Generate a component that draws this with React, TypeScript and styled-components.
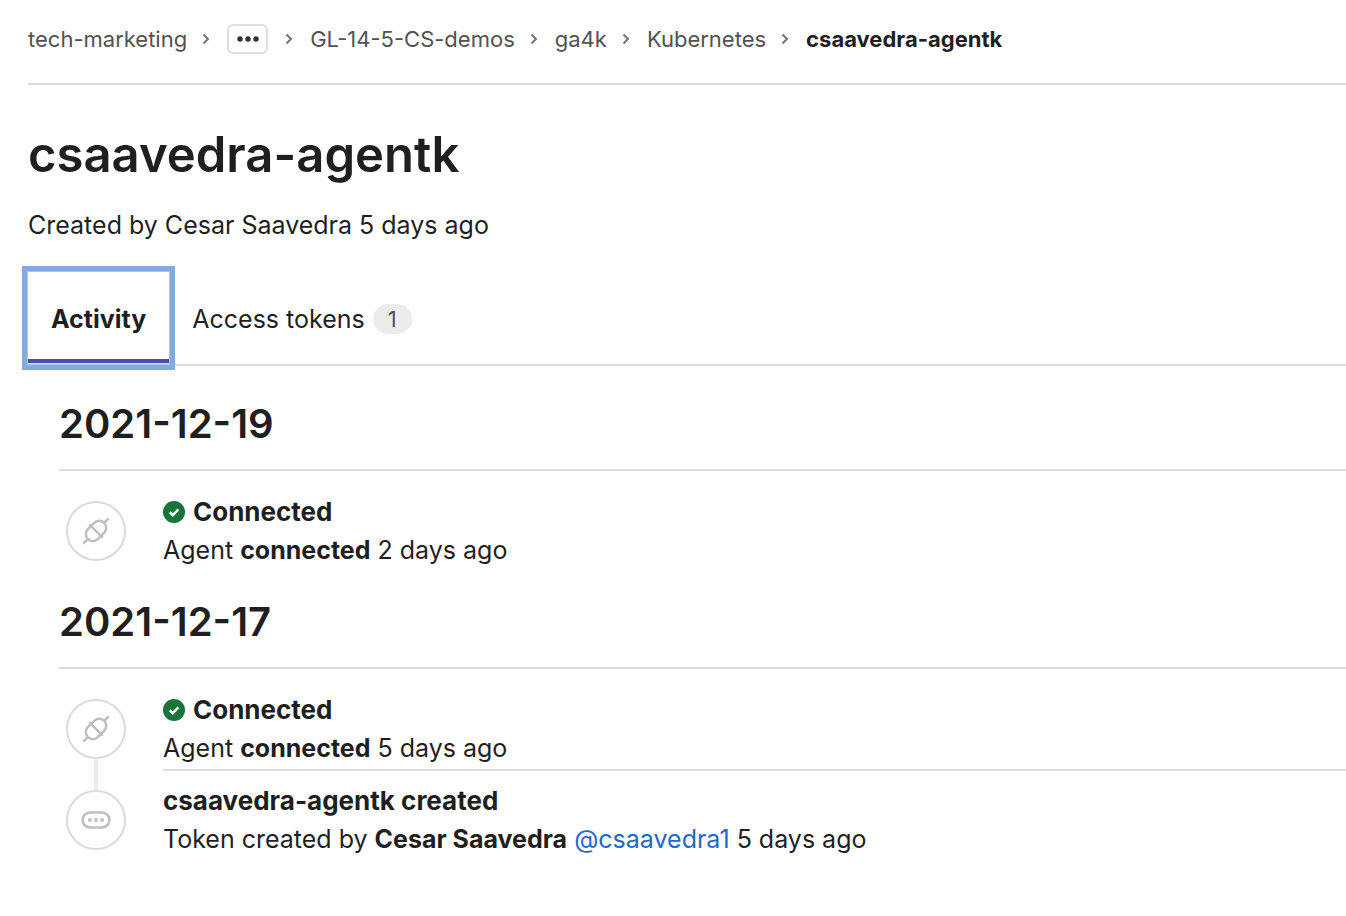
import React from "react";
import styled, { createGlobalStyle } from "styled-components";

const GlobalStyle = createGlobalStyle`
  *, *::before, *::after { box-sizing: border-box; }
  body {
    margin: 0;
    background: #fff;
    color: #1f1f1f;
    font-family: Inter, "Liberation Sans", sans-serif;
    font-size: 25px;
    line-height: 38px;
  }
`;

const Page = styled.main`
  padding-left: 28px;
`;

const Breadcrumbs = styled.nav`
  padding: 19px 0 24px;
  border-bottom: 2px solid #dbdbdb;
`;

const CrumbList = styled.ol`
  display: flex;
  flex-wrap: wrap;
  align-items: center;
  margin: 0;
  padding: 0;
  list-style: none;
  font-size: 22px;
  line-height: 40px;
`;

const Crumb = styled.li`
  display: flex;
  align-items: center;
`;

const CrumbLink = styled.a<{ $current?: boolean }>`
  color: ${(p) => (p.$current ? "#1f1f1f" : "#525252")};
  font-weight: ${(p) => (p.$current ? 700 : 400)};
  text-decoration: none;
`;

const Separator = styled.svg`
  width: 8px;
  height: 12px;
  margin: 0 17px 0 15px;
`;

const MoreButton = styled.button`
  display: flex;
  align-items: center;
  justify-content: center;
  width: 41px;
  height: 30px;
  margin-right: 2px;
  padding: 0;
  border: 2px solid #dfdfdf;
  border-radius: 6px;
  background: #fff;
`;

const Title = styled.h1`
  margin: 40px 0 0;
  font-size: 49px;
  font-weight: 600;
  line-height: 60px;
`;

const Subtitle = styled.p`
  margin: 21px 0 28px;
`;

const Tabs = styled.div`
  display: flex;
  border-bottom: 2px solid #dbdbdb;
`;

const Tab = styled.button<{ $active?: boolean }>`
  position: relative;
  z-index: ${(p) => (p.$active ? 1 : 0)};
  display: flex;
  align-items: center;
  gap: 8px;
  height: 92px;
  padding: 1px 23px 0;
  border: 0;
  background: #fff;
  color: #1f1f1f;
  font: inherit;
  font-weight: ${(p) => (p.$active ? 700 : 400)};
  outline: none;
  box-shadow: ${(p) =>
    p.$active
      ? "inset 0 -1px #cfe0f5, inset 0 -5px #4b4ba3, 0 0 0 1px #a5c5ec, 0 0 0 6px #82abdc"
      : "none"};
`;

const Count = styled.span`
  padding: 0 15px;
  border-radius: 15px;
  background: #ececec;
  color: #525252;
  font-size: 22px;
  line-height: 30px;
`;

const Feed = styled.div`
  display: flex;
  flex-direction: column;
  gap: 27px;
  padding: 34px 0 40px 31px;
`;

const DateHeading = styled.h2`
  margin: 0 0 11px;
  padding-bottom: 21px;
  border-bottom: 2px solid #dbdbdb;
  font-size: 40px;
  font-weight: 600;
  line-height: 48px;
`;

const Events = styled.ul`
  margin: 0;
  padding: 0 0 0 7px;
  list-style: none;
`;

const Event = styled.li`
  display: flex;
  gap: 37px;
`;

const Marker = styled.div`
  display: flex;
  flex-direction: column;
  align-items: center;
  flex: none;
  width: 60px;
`;

const Stem = styled.span<{ $visible?: boolean; $fill?: boolean }>`
  width: 4px;
  flex: ${(p) => (p.$fill ? "1 0 0" : "0 0 19px")};
  background: ${(p) => (p.$visible ? "#ebebeb" : "transparent")};
`;

const Circle = styled.span`
  display: flex;
  align-items: center;
  justify-content: center;
  flex: none;
  width: 60px;
  height: 60px;
  border: 2px solid #dbdbdb;
  border-radius: 50%;
  background: #fff;
`;

const Details = styled.div<{ $divided?: boolean }>`
  flex: 1;
  padding: 11px 0 2px;
  border-bottom: ${(p) => (p.$divided ? "2px solid #dbdbdb" : "0")};
`;

const EventTitle = styled.h3`
  display: flex;
  align-items: center;
  gap: 8px;
  margin: 0;
  font-size: 26px;
  font-weight: 700;
  line-height: 38px;
`;

const EventText = styled.p`
  margin: 0;
`;

const Strong = styled.strong`
  font-weight: 700;
`;

const UserLink = styled.a`
  color: #1f69c9;
  text-decoration: none;
`;

const Chevron = () => (
  <Separator viewBox="0 0 8 12" fill="none" stroke="#737373" strokeWidth="2" aria-hidden="true">
    <path d="M1.5 1.5 6 6l-4.5 4.5" />
  </Separator>
);

const EllipsisIcon = () => (
  <svg width="24" height="8" viewBox="0 0 24 8" fill="#303030" aria-hidden="true">
    <circle cx="4" cy="4" r="2.7" />
    <circle cx="12" cy="4" r="2.7" />
    <circle cx="20" cy="4" r="2.7" />
  </svg>
);

const PlugIcon = () => (
  <svg width="30" height="30" viewBox="-15 -15 30 30" fill="none" stroke="#bfbfbf" strokeWidth="2.5" aria-hidden="true">
    <g transform="rotate(-45)">
      <rect x="-11.5" y="-7" width="23" height="14" rx="7" />
      <path d="M0-9.5v19M-18-0h6.5M11.5 0H18" />
    </g>
  </svg>
);

const TokenIcon = () => (
  <svg width="30" height="18" viewBox="0 0 30 18" fill="none" aria-hidden="true">
    <rect x="1.5" y="1.5" width="27" height="15" rx="7.5" stroke="#bfbfbf" strokeWidth="2.7" />
    <path d="M7.2 7.3h3.4v3.4H7.2zM13.3 7.3h3.4v3.4h-3.4zM19.4 7.3h3.4v3.4h-3.4z" fill="#bfbfbf" />
  </svg>
);

const SuccessIcon = () => (
  <svg width="22" height="22" viewBox="0 0 22 22" fill="none" aria-hidden="true">
    <circle cx="11" cy="11" r="11" fill="#17753a" />
    <path d="m6.8 11.2 3 2.9 5.6-5.7" stroke="#fff" strokeWidth="2.7" />
  </svg>
);

type EventItem = {
  icon: "plug" | "token";
  title: string;
  success?: boolean;
  text: React.ReactNode;
};

const connected = (when: string): EventItem => ({
  icon: "plug",
  title: "Connected",
  success: true,
  text: (
    <>
      Agent <Strong>connected</Strong> {when}
    </>
  ),
});

const days: { date: string; events: EventItem[] }[] = [
  { date: "2021-12-19", events: [connected("2 days ago")] },
  {
    date: "2021-12-17",
    events: [
      connected("5 days ago"),
      {
        icon: "token",
        title: "csaavedra-agentk created",
        text: (
          <>
            Token created by <Strong>Cesar Saavedra</Strong>{" "}
            <UserLink href="#csaavedra1">@csaavedra1</UserLink> 5 days ago
          </>
        ),
      },
    ],
  },
];

export default function App() {
  return (
    <>
      <GlobalStyle />
      <Page>
        <Breadcrumbs aria-label="Breadcrumbs">
          <CrumbList>
            <Crumb>
              <CrumbLink href="#tech-marketing">tech-marketing</CrumbLink>
              <Chevron />
            </Crumb>
            <Crumb>
              <MoreButton type="button" aria-label="Show all breadcrumbs">
                <EllipsisIcon />
              </MoreButton>
              <Chevron />
            </Crumb>
            {["GL-14-5-CS-demos", "ga4k", "Kubernetes"].map((name) => (
              <Crumb key={name}>
                <CrumbLink href={`#${name}`}>{name}</CrumbLink>
                <Chevron />
              </Crumb>
            ))}
            <Crumb>
              <CrumbLink href="#csaavedra-agentk" aria-current="page" $current>
                csaavedra-agentk
              </CrumbLink>
            </Crumb>
          </CrumbList>
        </Breadcrumbs>

        <Title>csaavedra-agentk</Title>
        <Subtitle>Created by Cesar Saavedra 5 days ago</Subtitle>

        <Tabs role="tablist">
          <Tab type="button" role="tab" aria-selected="true" $active>
            Activity
          </Tab>
          <Tab type="button" role="tab" aria-selected="false">
            Access tokens <Count>1</Count>
          </Tab>
        </Tabs>

        <Feed role="tabpanel">
          {days.map(({ date, events }) => (
            <section key={date}>
              <DateHeading>{date}</DateHeading>
              <Events>
                {events.map((event, i) => {
                  const last = i === events.length - 1;
                  return (
                    <Event key={event.title}>
                      <Marker>
                        <Stem $visible={i > 0} />
                        <Circle>{event.icon === "plug" ? <PlugIcon /> : <TokenIcon />}</Circle>
                        <Stem $fill $visible={!last} />
                      </Marker>
                      <Details $divided={!last}>
                        <EventTitle>
                          {event.success && <SuccessIcon />}
                          {event.title}
                        </EventTitle>
                        <EventText>{event.text}</EventText>
                      </Details>
                    </Event>
                  );
                })}
              </Events>
            </section>
          ))}
        </Feed>
      </Page>
    </>
  );
}
